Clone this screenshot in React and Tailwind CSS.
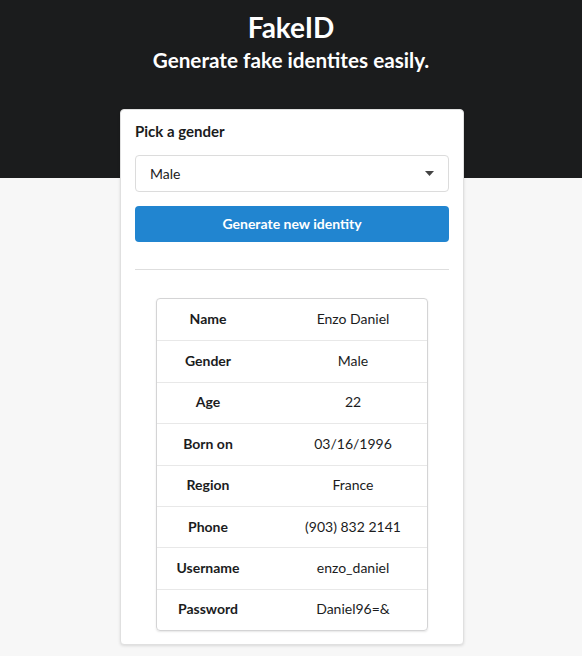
import React from "react";

const rows = [
  ["Name", "Enzo Daniel"],
  ["Gender", "Male"],
  ["Age", "22"],
  ["Born on", "03/16/1996"],
  ["Region", "France"],
  ["Phone", "(903) 832 2141"],
  ["Username", "enzo_daniel"],
  ["Password", "Daniel96=&"],
];

export default function App() {
  return (
    <div
      className="min-h-screen bg-[#f7f7f7] text-[#1b1c1d]"
      style={{ fontFamily: "Lato, 'Open Sans', sans-serif" }}
    >
      {/* Header */}
      <div className="h-[178px] bg-[#1b1c1d] pt-[9px] text-center text-white">
        <h1 className="text-[28px] font-bold leading-[36px]">FakeID</h1>
        <h2 className="mt-[2px] text-[20.7px] font-bold leading-[26px]">
          Generate fake identites easily.
        </h2>
      </div>

      {/* Card */}
      <div className="pl-[2px]">
        <div className="mx-auto -mt-[69px] w-[344px] rounded-[4px] border border-[#e0e0e0] bg-white px-[14px] pt-[11px] pb-[13px] shadow-[0_1px_3px_rgba(0,0,0,0.12)]">
          <div className="text-[15px] font-bold leading-[20px]">Pick a gender</div>

          <div className="mt-[14px] flex h-[37px] items-center justify-between rounded-[4px] border border-[#dcdcdc] bg-white pl-[14px] pr-[14px] pb-[1px] text-[14px]">
            <span>Male</span>
            <svg width="9" height="5" viewBox="0 0 9 5" className="fill-[#444]">
              <path d="M0 0h9L4.5 5z" />
            </svg>
          </div>

          <button className="mt-[14px] h-[36px] w-full rounded-[4px] bg-[#2185d0] pb-[2px] text-[14px] font-bold text-white">
            Generate new identity
          </button>

          <div className="mt-[27px] border-t border-[#dedede]" />

          <div className="mx-auto mt-[28px] w-[272px] overflow-hidden rounded-[4px] border border-[#d4d4d5] shadow-[0_1px_2px_rgba(0,0,0,0.1)]">
            {rows.map(([label, value], i) => (
              <div
                key={label}
                className={
                  "flex h-[41.4px] items-center pb-[2px] text-[14px] " +
                  (i > 0 ? "border-t border-[#e8e8e8]" : "")
                }
              >
                <div className="w-[102px] text-center font-bold">{label}</div>
                <div className="flex-1 pl-[20px] text-center">{value}</div>
              </div>
            ))}
          </div>
        </div>
      </div>
    </div>
  );
}
